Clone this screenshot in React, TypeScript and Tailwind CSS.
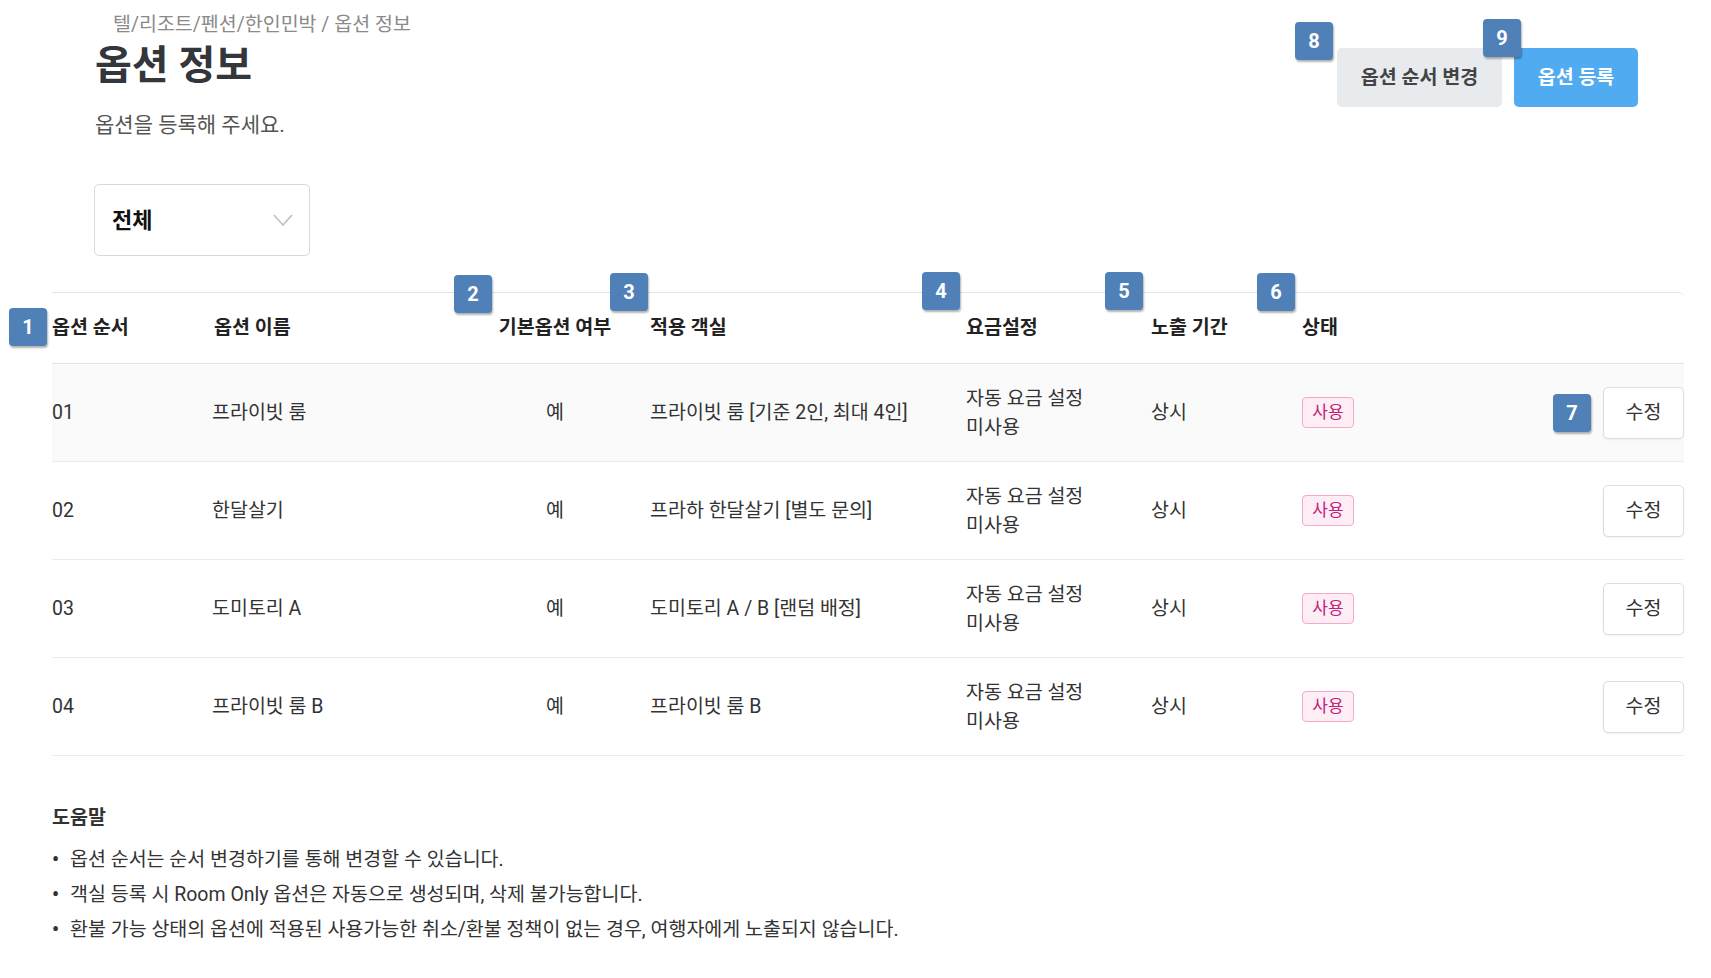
const rows = [
  { no: "01", name: "프라이빗 룸", room: "프라이빗 룸 [기준 2인, 최대 4인]" },
  { no: "02", name: "한달살기", room: "프라하 한달살기 [별도 문의]" },
  { no: "03", name: "도미토리 A", room: "도미토리 A / B [랜덤 배정]" },
  { no: "04", name: "프라이빗 룸 B", room: "프라이빗 룸 B" },
];

const marks = [
  { n: 1, cls: "left-[9px] top-[308px]" },
  { n: 2, cls: "left-[454px] top-[275px]" },
  { n: 3, cls: "left-[610px] top-[273px]" },
  { n: 4, cls: "left-[922px] top-[272px]" },
  { n: 5, cls: "left-[1105px] top-[272px]" },
  { n: 6, cls: "left-[1257px] top-[273px]" },
  { n: 7, cls: "left-[1553px] top-[394px]" },
  { n: 8, cls: "left-[1295px] top-[22px]" },
  { n: 9, cls: "left-[1483px] top-[19px]" },
];

const grid =
  "grid grid-cols-[162px_266px_150px_336px_185px_151px_1fr_81px] items-center";

function Mark({ n, cls }: { n: number; cls: string }) {
  return (
    <div
      className={`absolute ${cls} w-[38px] h-[38px] rounded-[4px] bg-[#4f80b8] text-white text-[20px] font-bold flex items-center justify-center shadow-[1px_2px_2px_rgba(0,0,0,0.3)]`}
    >
      {n}
    </div>
  );
}

export default function App() {
  return (
    <div className="relative w-[1711px] min-h-[978px] bg-white text-[#333] font-['Roboto','Noto_Sans_CJK_KR',sans-serif]">
      {/* Page header */}
      <div className="flex justify-between">
        <div className="pl-[95px]">
          <p className="pl-[18px] pt-[11px] text-[19.5px] leading-[27px] text-[#8a8a8a]">
            텔/리조트/펜션/한인민박 / 옵션 정보
          </p>
          <h1 className="mt-[5px] text-[40px] leading-[46px] font-bold text-[#33363a]">
            옵션 정보
          </h1>
          <p className="mt-[21px] text-[21px] leading-[30px] text-[#555]">
            옵션을 등록해 주세요.
          </p>
        </div>
        <div className="flex gap-[12px] pt-[48px] pr-[73px]">
          <button className="w-[165px] h-[59px] rounded-[5px] bg-[#e8ebee] text-[19.5px] font-bold text-[#444]">
            옵션 순서 변경
          </button>
          <button className="w-[124px] h-[59px] rounded-[5px] bg-[#50abf1] text-[19.5px] font-bold text-white">
            옵션 등록
          </button>
        </div>
      </div>

      {/* Filter */}
      <div className="ml-[94px] mt-[44px] w-[216px] h-[72px] border border-[#d9d9d9] rounded-[5px] flex items-center justify-between pl-[17px] pr-[16px]">
        <span className="text-[22px] font-bold text-[#111]">전체</span>
        <svg width="20" height="12" viewBox="0 0 20 12" fill="none">
          <polyline points="1,1 10,11 19,1" stroke="#bdbdbd" strokeWidth="1.5" />
        </svg>
      </div>

      {/* Table */}
      <div className="ml-[52px] mt-[36px] w-[1632px]">
        <div
          className={`${grid} h-[72px] border-t border-b border-[#e3e3e3] rounded-tr-[6px] text-[19.5px] font-bold text-[#222]`}
        >
          <span>옵션 순서</span>
          <span>옵션 이름</span>
          <span className="text-center">기본옵션 여부</span>
          <span className="pl-[20px]">적용 객실</span>
          <span>요금설정</span>
          <span>노출 기간</span>
          <span>상태</span>
          <span />
        </div>
        {rows.map((r, i) => (
          <div
            key={r.no}
            className={`${grid} h-[98px] border-b border-[#ebebeb] text-[19.5px] ${
              i === 0 ? "bg-[#fafafa]" : "bg-white"
            }`}
          >
            <span>{r.no}</span>
            <span className="-ml-[2px]">{r.name}</span>
            <span className="text-center">예</span>
            <span className="pl-[20px]">{r.room}</span>
            <span className="leading-[29px]">
              자동 요금 설정
              <br />
              미사용
            </span>
            <span>상시</span>
            <span>
              <span className="inline-flex items-center justify-center w-[52px] h-[31px] rounded-[4px] border border-[#f7a8cb] bg-[#fdeef5] text-[17px] text-[#c2207a]">
                사용
              </span>
            </span>
            <button className="w-[81px] h-[52px] rounded-[5px] border border-[#dddddd] bg-white text-[19.5px] text-[#333] shadow-[0_1px_2px_rgba(0,0,0,0.06)]">
              수정
            </button>
          </div>
        ))}
      </div>

      {/* Help */}
      <div className="ml-[52px] mt-[48px] pb-[30px]">
        <p className="text-[19.5px] leading-[27px] font-semibold text-[#333]">도움말</p>
        <ul className="mt-[11px] text-[19.5px] leading-[35px] text-[#333]">
          <li className="flex">
            <span className="w-[18px] font-bold">•</span>
            옵션 순서는 순서 변경하기를 통해 변경할 수 있습니다.
          </li>
          <li className="flex">
            <span className="w-[18px] font-bold">•</span>
            객실 등록 시 Room Only 옵션은 자동으로 생성되며, 삭제 불가능합니다.
          </li>
          <li className="flex">
            <span className="w-[18px] font-bold">•</span>
            환불 가능 상태의 옵션에 적용된 사용가능한 취소/환불 정책이 없는 경우, 여행자에게 노출되지 않습니다.
          </li>
        </ul>
      </div>

      {marks.map((m) => (
        <Mark key={m.n} n={m.n} cls={m.cls} />
      ))}
    </div>
  );
}
